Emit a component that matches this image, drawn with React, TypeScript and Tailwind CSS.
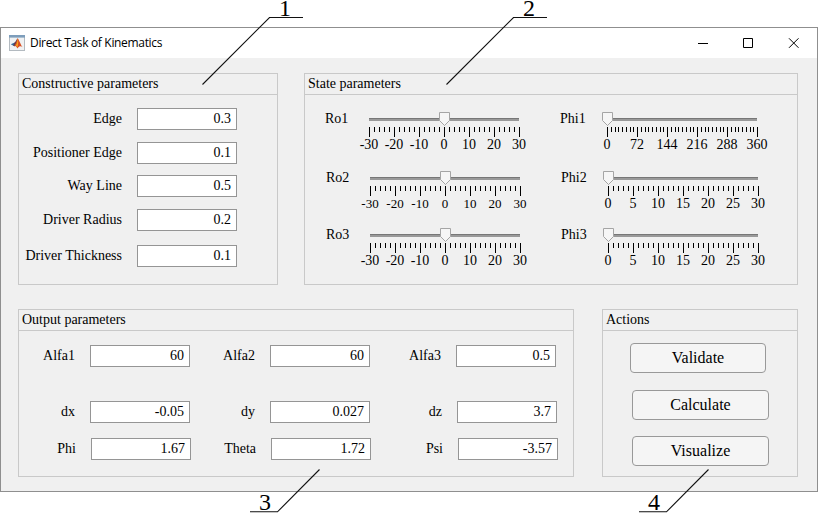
import type { ReactNode } from "react";

function Panel({ title, className, children }: { title: string; className: string; children: ReactNode }) {
  return (
    <section className={`flex shrink-0 flex-col border border-[#c9c9c9] ${className}`}>
      <h2 className="h-[21px] shrink-0 border-b border-[#c9c9c9] pl-[3px] text-[14px] leading-[19px]">{title}</h2>
      {children}
    </section>
  );
}

function Field({ label, value, className = "" }: { label: string; value: string; className?: string }) {
  return (
    <label className={`flex h-[22px] items-center justify-end gap-[15px] whitespace-nowrap ${className}`}>
      <span className="leading-[20px]">{label}</span>
      <span className="h-[22px] w-[100px] shrink-0 border border-[#959595] bg-white pr-[5px] text-right leading-[19px]">
        {value}
      </span>
    </label>
  );
}

type SliderProps = {
  label: string;
  marks: string[];
  minor: number;
  thumb: number;
  labelWidth: string;
  className?: string;
  marksClass?: string;
};

function Slider({ label, marks, minor, thumb, labelWidth, className = "", marksClass = "text-[14px]" }: SliderProps) {
  const count = (marks.length - 1) * minor;
  return (
    <div className={`flex h-[42px] ${className}`}>
      <span className={`shrink-0 leading-[13px] ${labelWidth}`}>{label}</span>
      <div className="w-[151px] shrink-0">
        <svg width="151" height="25" viewBox="0 0 151 25" className="block overflow-visible" shapeRendering="crispEdges">
          <rect x="0" y="6" width="150" height="3" fill="#999999" />
          <rect x="0" y="6" width="150" height="1" fill="#777777" />
          {Array.from({ length: count + 1 }, (_, i) => (
            <rect
              key={i}
              x={Math.round((i * 150) / count)}
              y="15"
              width="1"
              height={i % minor === 0 ? 10 : 5}
              fill="#000"
            />
          ))}
          <path
            d={`M${thumb - 5} .5h10v8l-5 5l-5-5z`}
            fill="#f6f6f6"
            stroke="#a5a5a5"
            strokeWidth="1"
            shapeRendering="geometricPrecision"
          />
        </svg>
        <div className={`flex w-[150px] justify-between leading-[16px] ${marksClass}`}>
          {marks.map((m) => (
            <span key={m} className="flex w-0 justify-center whitespace-nowrap">
              {m}
            </span>
          ))}
        </div>
      </div>
    </div>
  );
}

function ActionButton({ children, className }: { children: string; className: string }) {
  return (
    <button
      className={`h-[30px] shrink-0 rounded-[4px] border border-[#999999] bg-[#f5f5f5] text-center text-[16px] leading-[28px] ${className}`}
    >
      {children}
    </button>
  );
}

function MatlabIcon() {
  return (
    <svg width="16" height="16" viewBox="0 0 16 16" className="shrink-0">
      <rect x=".5" y=".5" width="15" height="15" fill="#f0f1f2" stroke="#b3bac0" />
      <rect x="0" y="0" width="16" height="2.6" fill="#7d9dbb" />
      <path d="M1.8 9.3L5.2 7.8L7 8.7L4.8 11z" fill="#356d9c" />
      <path d="M5.2 7.8C6.7 7 7.3 4.2 8.8 3.2L7.5 8.6L5.6 11.6L4.3 10.6z" fill="#653b4c" />
      <path d="M8.8 3.2C10 4.7 11.5 9.5 13.6 12.2C11.8 10.8 10.5 11 8.2 13.4C7.8 11.8 6.6 10.8 5.2 10.8C7.2 9.5 7.5 5 8.8 3.2z" fill="#d94d20" />
      <path d="M8.8 3.6C9.4 6.5 9.3 9.8 8.3 12.5C7.9 11.4 7.4 11 6.7 10.6C8.2 8.8 8.5 5.5 8.8 3.6z" fill="#f6a31c" />
    </svg>
  );
}

function TitleBar() {
  return (
    <header className="flex h-[30px] shrink-0 items-center bg-white pl-[8px] pr-[18px]">
      <MatlabIcon />
      <span className="ml-[5px] grow whitespace-nowrap font-['Open_Sans','Noto_Sans',sans-serif] text-[12px] leading-[16px] tracking-[-0.33px]">
        Direct Task of Kinematics
      </span>
      <svg width="101" height="10" viewBox="0 0 101 10" fill="none" stroke="#000">
        <path d="M0 5.5H10M45.5 .5h9v9h-9z" />
        <path d="M91 .3l9.5 9.5M100.500 .3l-9.500 9.5" />
      </svg>
    </header>
  );
}

function Callout({ points, className, digit }: { points: string; className: string; digit: string }) {
  return (
    <>
      <svg className="pointer-events-none absolute inset-0" width="818" height="513" viewBox="0 0 818 513">
        <polyline points={points} fill="none" stroke="#111" strokeWidth="1.1" />
      </svg>
      <span className={`absolute text-[24px] leading-[17px] ${className}`}>{digit}</span>
    </>
  );
}

const symmetric = ["-30", "-20", "-10", "0", "10", "20", "30"];
const positive = ["0", "5", "10", "15", "20", "25", "30"];
const degrees = ["0", "72", "144", "216", "288", "360"];

export default function App() {
  return (
    <div className="relative h-[513px] w-[818px] bg-white pt-[27px] font-['Liberation_Serif','Times_New_Roman',serif] text-[14px] text-black">
      <main className="flex h-[465px] w-[818px] flex-col border border-[#8f8f8f] bg-[#f0f0f0]">
        <TitleBar />
        <div className="mt-[15px] flex gap-[26px] pl-[17px]">
          <Panel title="Constructive parameters" className="h-[212px] w-[260px]">
            <div className="flex w-[218px] flex-col pt-[13px]">
              <Field label="Edge" value="0.3" />
              <Field label="Positioner Edge" value="0.1" className="mt-[12px]" />
              <Field label="Way Line" value="0.5" className="mt-[11px]" />
              <Field label="Driver Radius" value="0.2" className="mt-[12px]" />
              <Field label="Driver Thickness" value="0.1" className="mt-[14px]" />
            </div>
          </Panel>
          <Panel title="State parameters" className="h-[212px] w-[494px]">
            <div className="flex gap-[84px] pl-[20px] pt-[17px]">
              <div className="flex w-[151px] flex-col">
                <Slider label="Ro1" marks={symmetric} minor={5} thumb={75.5} labelWidth="w-[44px]" />
                <Slider label="Ro2" marks={symmetric} minor={5} thumb={75.5} labelWidth="w-[44px]" className="ml-px mt-[17px]" marksClass="text-[13px]" />
                <Slider label="Ro3" marks={symmetric} minor={5} thumb={75.5} labelWidth="w-[44px]" className="ml-px mt-[15px]" />
              </div>
              <div className="flex w-[200px] flex-col">
                <Slider label="Phi1" marks={degrees} minor={8} thumb={0.5} labelWidth="w-[47px]" />
                <Slider label="Phi2" marks={positive} minor={5} thumb={0.5} labelWidth="w-[47px]" className="ml-px mt-[17px]" />
                <Slider label="Phi3" marks={positive} minor={5} thumb={0.5} labelWidth="w-[47px]" className="ml-px mt-[15px]" />
              </div>
            </div>
          </Panel>
        </div>
        <div className="mt-[24px] flex gap-[28px] pl-[17px]">
          <Panel title="Output parameters" className="h-[168px] w-[556px]">
            <div className="flex pt-[14px]">
              <div className="flex w-[171px] flex-col">
                <Field label="Alfa1" value="60" />
                <Field label="dx" value="-0.05" className="mt-[34px]" />
                <Field label="Phi" value="1.67" className="-mr-px mt-[15px]" />
              </div>
              <div className="flex w-[180px] flex-col">
                <Field label="Alfa2" value="60" />
                <Field label="dy" value="0.027" className="mt-[34px]" />
                <Field label="Theta" value="1.72" className="-mr-px mt-[15px]" />
              </div>
              <div className="flex w-[186px] flex-col">
                <Field label="Alfa3" value="0.5" />
                <Field label="dz" value="3.7" className="-mr-px mt-[34px]" />
                <Field label="Psi" value="-3.57" className="-mr-[2px] mt-[15px]" />
              </div>
            </div>
          </Panel>
          <Panel title="Actions" className="h-[168px] w-[196px]">
            <div className="flex flex-col pl-[27px] pt-[12px]">
              <ActionButton className="w-[136px]">Validate</ActionButton>
              <ActionButton className="ml-[2px] mt-[17px] w-[137px]">Calculate</ActionButton>
              <ActionButton className="ml-[2px] mt-[16px] w-[137px]">Visualize</ActionButton>
            </div>
          </Panel>
        </div>
      </main>
      <Callout points="202.500,84.500 269.500,17.500 303,17.500" className="left-[279px] top-0" digit="1" />
      <Callout points="446.500,84.500 513.500,17.500 547,17.500" className="left-[523px] top-0" digit="2" />
      <Callout points="319.500,469.500 277.500,511.800 250,511.800" className="left-[259px] top-[494px]" digit="3" />
      <Callout points="708.500,469.500 666.500,511.800 639,511.800" className="left-[648px] top-[494px]" digit="4" />
    </div>
  );
}
